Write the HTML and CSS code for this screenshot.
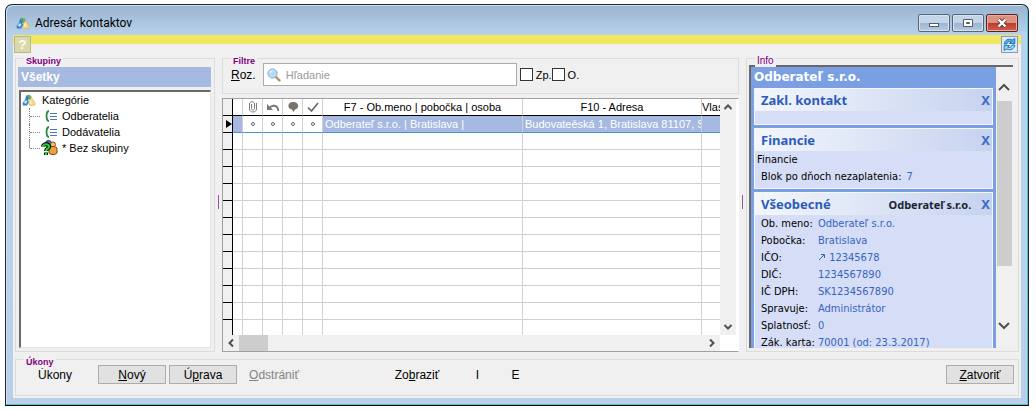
FILE: index.html
```html
<!DOCTYPE html>
<html lang="sk">
<head>
  <meta charset="UTF-8">
  <meta name="viewport" content="width=device-width, initial-scale=1.0">
  <title>Adresár kontaktov</title>
  <link rel="stylesheet" href="styles.css">
</head>
<body>
  <div class="window">
    <!-- Title bar -->
    <header class="titlebar">
      <svg class="icon" viewBox="0 0 14 12">
        <path d="M4 1.500c2-1.500 5-1 5.500 1.500L8 6 5 5z" fill="#6fae5a"/>
        <path d="M4 2l3 1-1 3 1 2-2 3.500H1L.5 9 3 6z" fill="#2f83c8"/>
        <path d="M1.500 8.500L4 6l1.500 1.500L4 10z" fill="#c4e4f8"/>
        <path d="M9.500 3.500l4 6.500c-1.500 2-5 2-7 0z" fill="#f3dc86" stroke="#dca548" stroke-width=".6"/>
        <path d="M9 5l-1.500 4.500h2z" fill="#fff6cf"/>
      </svg>
      <h1>Adresár kontaktov</h1>
      <div class="window-buttons">
        <button type="button" aria-label="Minimalizovať">
          <svg viewBox="0 0 12 10"><rect x="1.500" y="5.500" width="9" height="3" fill="#fff" stroke="#555c68"/></svg>
        </button>
        <button type="button" aria-label="Maximalizovať">
          <svg viewBox="0 0 12 10"><path d="M1.500 1.500h9v7h-9z" fill="#fff" stroke="#555c68"/><path d="M4.500 4.500h3v1h-3z" fill="#9db4cf" stroke="#555c68"/></svg>
        </button>
        <button type="button" class="close" aria-label="Zavrieť">
          <svg viewBox="0 0 12 10"><path d="M2.500 1.500l7 7M9.500 1.500l-7 7" stroke="#5b3434" stroke-width="4"/><path d="M2.500 1.500l7 7M9.500 1.500l-7 7" stroke="#fff" stroke-width="2.400"/></svg>
        </button>
      </div>
    </header>

    <div class="client">
      <div class="toolbar">
        <button type="button" class="help">?</button>
        <button type="button" class="refresh" aria-label="Obnoviť">
          <svg viewBox="0 0 14 14">
            <path d="M2 6.500C2.500 3 6 1 9.500 2.800L12 1.500V6H7l1.700-1.500C6.500 3.800 5 4.800 4.500 6.500z" fill="#4db4ea" stroke="#1565b5" stroke-width=".8"/>
            <path d="M12 7.500C11.500 11 8 13 4.500 11.200L2 12.500V8h5L5.300 9.500c2.200.7 3.700-.3 4.200-2z" fill="#8fdcf5" stroke="#1565b5" stroke-width=".8"/>
          </svg>
        </button>
      </div>

      <main class="columns">
        <!-- Groups tree -->
        <fieldset class="groups">
          <legend>Skupiny</legend>
          <h2>Všetky</h2>
          <div class="tree">
            <div class="tree-root">
              <svg class="icon" viewBox="0 0 14 12">
                <path d="M4 1.500c2-1.500 5-1 5.500 1.500L8 6 5 5z" fill="#6fae5a"/>
                <path d="M4 2l3 1-1 3 1 2-2 3.500H1L.5 9 3 6z" fill="#2f83c8"/>
                <path d="M1.500 8.500L4 6l1.500 1.500L4 10z" fill="#c4e4f8"/>
                <path d="M9.500 3.500l4 6.500c-1.500 2-5 2-7 0z" fill="#f3dc86" stroke="#dca548" stroke-width=".6"/>
                <path d="M9 5l-1.500 4.500h2z" fill="#fff6cf"/>
              </svg>
              Kategórie
            </div>
            <ul>
              <li>
                <svg class="icon" viewBox="0 0 14 12"><path d="M5 1C2 1.500 3 4 2.500 6 3 8 2 10.500 5 11" fill="none" stroke="#2c8a45" stroke-width="1.800"/><path d="M6 3.500h7M6 6.500h7M6 9.500h7" stroke="#4d78bd"/></svg>
                Odberatelia
              </li>
              <li>
                <svg class="icon" viewBox="0 0 14 12"><path d="M5 1C2 1.500 3 4 2.500 6 3 8 2 10.500 5 11" fill="none" stroke="#2c8a45" stroke-width="1.800"/><path d="M6 3.500h7M6 6.500h7M6 9.500h7" stroke="#4d78bd"/></svg>
                Dodávatelia
              </li>
              <li>
                <svg class="icon-group" viewBox="0 0 17 16">
                  <circle cx="7.500" cy="3.500" r="3" fill="#5b6fae" stroke="#27325e"/>
                  <circle cx="12" cy="4.500" r="2.500" fill="#f3c171" stroke="#8a4e12"/>
                  <path d="M8 8c2-2 6-2 8 0v5c-2 2-6 2-8 0z" fill="#eda341" stroke="#7c420d"/>
                  <path d="M2 6.500c0-3 6-3 6 .2C8 9 5 8.500 5 11M5 12.500v2.500" fill="none" stroke="#000" stroke-width="4"/>
                  <path d="M2 6.500c0-3 6-3 6 .2C8 9 5 8.500 5 11M5 12.500v2.500" fill="none" stroke="#17d82b" stroke-width="2.200"/>
                </svg>
                * Bez skupiny
              </li>
            </ul>
          </div>
        </fieldset>

        <div class="splitter"></div>

        <!-- Filter and contact list -->
        <section class="contacts">
          <fieldset class="filters">
            <legend>Filtre</legend>
            <label for="search"><u>R</u>oz.</label>
            <div class="search">
              <svg viewBox="0 0 14 14"><path d="M8.500 8.500l4 4" stroke="#c08a55" stroke-width="2.400" stroke-linecap="round"/><circle cx="5.500" cy="5.500" r="4.600" fill="#b5dcf6" stroke="#83b1d8"/><path d="M3 5c0-1.500 1-2.300 2.500-2.300" fill="none" stroke="#fff"/></svg>
              <input type="text" id="search" placeholder="Hľadanie">
            </div>
            <label class="check"><input type="checkbox">Zp.</label>
            <label class="check"><input type="checkbox">O.</label>
          </fieldset>

          <div class="grid">
            <div class="grid-view">
              <table>
                <colgroup>
                  <col class="col-mark"><col class="col-mark">
                  <col class="col-flag"><col class="col-flag"><col class="col-flag"><col class="col-flag">
                  <col class="col-name"><col class="col-address"><col>
                </colgroup>
                <thead>
                  <tr>
                    <th></th>
                    <th></th>
                    <th><svg viewBox="0 0 12 12"><path d="M4.500 3v4.500c0 2 3 2 3 0V3c0-3-5-3-5 0v5c0 4 7 4 7 0V2" fill="none" stroke="#808080"/></svg></th>
                    <th><svg viewBox="0 0 12 12"><path d="M0 3v6h6L3.800 6.800C7 4.500 10 6 10.500 10h1.500C12.500 4 7 2 2.500 5.500z" fill="#777"/></svg></th>
                    <th><svg viewBox="0 0 12 12"><path d="M6 1c7 0 6 7 2 7.500L6.500 11 5 8.500C0 8 0 1 6 1z" fill="#7a716b"/></svg></th>
                    <th><svg viewBox="0 0 12 12"><path d="M1 6.500L4.500 10 11 2" fill="none" stroke="#666" stroke-width="1.600"/></svg></th>
                    <th>F7 - Ob.meno | pobočka | osoba</th>
                    <th>F10 - Adresa</th>
                    <th class="clipped">Vlas</th>
                  </tr>
                </thead>
                <tbody>
                  <tr class="selected">
                    <td><svg viewBox="0 0 6 8"><path d="M0 0l6 4-6 4z"/></svg></td>
                    <td></td>
                    <td><i class="dot"></i></td><td><i class="dot"></i></td><td><i class="dot"></i></td><td><i class="dot"></i></td>
                    <td>Odberateľ s.r.o. | Bratislava |</td>
                    <td>Budovateěská 1, Bratislava 81107, S</td>
                    <td></td>
                  </tr>
                  <tr><td></td><td></td><td></td><td></td><td></td><td></td><td></td><td></td><td></td></tr>
                  <tr><td></td><td></td><td></td><td></td><td></td><td></td><td></td><td></td><td></td></tr>
                  <tr><td></td><td></td><td></td><td></td><td></td><td></td><td></td><td></td><td></td></tr>
                  <tr><td></td><td></td><td></td><td></td><td></td><td></td><td></td><td></td><td></td></tr>
                  <tr><td></td><td></td><td></td><td></td><td></td><td></td><td></td><td></td><td></td></tr>
                  <tr><td></td><td></td><td></td><td></td><td></td><td></td><td></td><td></td><td></td></tr>
                  <tr><td></td><td></td><td></td><td></td><td></td><td></td><td></td><td></td><td></td></tr>
                  <tr><td></td><td></td><td></td><td></td><td></td><td></td><td></td><td></td><td></td></tr>
                  <tr><td></td><td></td><td></td><td></td><td></td><td></td><td></td><td></td><td></td></tr>
                  <tr><td></td><td></td><td></td><td></td><td></td><td></td><td></td><td></td><td></td></tr>
                  <tr><td></td><td></td><td></td><td></td><td></td><td></td><td></td><td></td><td></td></tr>
                  <tr><td></td><td></td><td></td><td></td><td></td><td></td><td></td><td></td><td></td></tr>
                </tbody>
              </table>
            </div>
            <div class="scroll-y">
              <button type="button" aria-label="Hore"><svg viewBox="0 0 10 10"><path d="M1.500 7L5 3.500 8.500 7"/></svg></button>
              <button type="button" aria-label="Dole"><svg viewBox="0 0 10 10"><path d="M1.500 3L5 6.500 8.500 3"/></svg></button>
            </div>
            <div class="scroll-x">
              <button type="button" aria-label="Vľavo"><svg viewBox="0 0 10 10"><path d="M7 1.500L3.500 5 7 8.500"/></svg></button>
              <div class="thumb"></div>
              <button type="button" aria-label="Vpravo"><svg viewBox="0 0 10 10"><path d="M3 1.500L6.500 5 3 8.500"/></svg></button>
            </div>
          </div>
        </section>

        <div class="splitter"></div>

        <!-- Contact detail -->
        <fieldset class="info">
          <legend>Info</legend>
          <div class="info-frame">
            <div class="info-view">
              <h2>Odberateľ s.r.o.</h2>
              <section class="card">
                <h3>Zakl. kontakt <button type="button">X</button></h3>
                <div class="card-body"></div>
              </section>
              <section class="card">
                <h3>Financie <button type="button">X</button></h3>
                <div class="card-body">
                  <p>Financie</p>
                  <dl class="inline"><dt>Blok po dňoch nezaplatenia:</dt><dd>7</dd></dl>
                </div>
              </section>
              <section class="card">
                <h3>Všeobecné <small>Odberateľ s.r.o.</small> <button type="button">X</button></h3>
                <div class="card-body">
                  <dl>
                    <dt>Ob. meno:</dt><dd>Odberateľ s.r.o.</dd>
                    <dt>Pobočka:</dt><dd>Bratislava</dd>
                    <dt>IČO:</dt><dd><svg viewBox="0 0 8 8"><path d="M1 7l5.500-5.500M3 1.500h3.500V5" fill="none" stroke="#3565bd"/></svg> 12345678</dd>
                    <dt>DIČ:</dt><dd>1234567890</dd>
                    <dt>IČ DPH:</dt><dd>SK1234567890</dd>
                    <dt>Spravuje:</dt><dd>Administrátor</dd>
                    <dt>Splatnosť:</dt><dd>0</dd>
                    <dt>Zák. karta:</dt><dd>70001 (od: 23.3.2017)</dd>
                  </dl>
                </div>
              </section>
            </div>
            <div class="info-scroll">
              <button type="button" aria-label="Hore"><svg viewBox="0 0 12 12"><path d="M1 9l5-5 5 5"/></svg></button>
              <div class="thumb"></div>
              <button type="button" aria-label="Dole"><svg viewBox="0 0 12 12"><path d="M1 3l5 5 5-5"/></svg></button>
            </div>
          </div>
        </fieldset>
      </main>

      <!-- Actions -->
      <fieldset class="actions">
        <legend>Úkony</legend>
        <button type="button" class="flat menu">Úkony</button>
        <button type="button"><u>N</u>ový</button>
        <button type="button">Ú<u>p</u>rava</button>
        <button type="button" class="flat remove" disabled><u>O</u>dstrániť</button>
        <button type="button" class="flat show">Zo<u>b</u>raziť</button>
        <button type="button" class="flat letter">I</button>
        <button type="button" class="flat letter">E</button>
        <button type="button" class="quit"><u>Z</u>atvoriť</button>
      </fieldset>
    </div>
  </div>
</body>
</html>
```

FILE: styles.css
```css
* {
  box-sizing: border-box;
}
body {
  display: flex;
  height: 100vh;
  margin: 0;
  padding: 4px 7px 5px 5px;
  background: #fff;
  font-family: "Liberation Sans", Arial, sans-serif;
  font-size: 11px;
  color: #000;
}
h1, h2, h3, p, ul, dl, dd {
  margin: 0;
  padding: 0;
}
button {
  padding: 0;
  font-family: inherit;
  font-size: 12px;
  color: #000;
}
svg {
  display: block;
}
.window {
  flex: 1;
  min-width: 0;
  display: flex;
  flex-direction: column;
  padding: 0 7px 7px;
  border: 1px solid #1c2733;
  border-bottom-color: #000;
  border-radius: 7px 7px 0 0;
  box-shadow: inset -1px -1px 0 #4fc4d8, inset 1px 1px 0 #d3e2f2;
  background: linear-gradient(#99b4d1, #b9d1ea 30px, #b9d1ea 120px, #bad0e8);
}

/* title bar */
.titlebar {
  display: flex;
  align-items: center;
  height: 30px;
  padding: 5px 3px 0 3px;
}
.icon {
  width: 14px;
  height: 12px;
}
.titlebar h1 {
  flex: 1;
  margin-left: 5px;
  font: 12px "Noto Sans", sans-serif;
  font-family: Roboto, "Segoe UI", sans-serif;
}
.window-buttons {
  display: flex;
  gap: 2px;
}
.window-buttons button {
  display: flex;
  align-items: center;
  justify-content: center;
  width: 32px;
  height: 18px;
  border: 1px solid #566579;
  border-radius: 2px;
  box-shadow: inset 0 0 0 1px #d5e2f0;
  background: linear-gradient(#c5d5e8 50%, #9db5d0 50%, #b5cbe3);
}
.window-buttons .close {
  border-color: #5a2323;
  box-shadow: inset 0 0 0 1px #e5aca1;
  background: linear-gradient(#dc9183 50%, #bb3b2a 50%, #d1604c);
}
.window-buttons svg {
  width: 12px;
  height: 10px;
}

.client {
  flex: 1;
  min-height: 0;
  display: flex;
  flex-direction: column;
  padding: 0 2px 2px;
  background: #f0f0f0;
}
.toolbar {
  display: flex;
  justify-content: space-between;
  height: 23px;
  margin: 0 -2px;
  padding: 1px 3px 0 1px;
  background: linear-gradient(#f0e861 9px, #f0f0f0 9px);
}
.toolbar button {
  width: 17px;
  height: 17px;
  border: 1px solid #b8b78f;
  background: #dcd9a9;
}
.toolbar .help {
  font-size: 13px;
  font-weight: bold;
  line-height: 15px;
  color: #fff;
}
.toolbar .refresh {
  border-color: #8c99a6;
  background: #dceaf5;
}
.refresh svg {
  width: 15px;
  height: 15px;
}

/* group boxes */
fieldset {
  position: relative;
  min-width: 0;
  margin: 0;
  padding: 0;
  border: 1px solid #dcdcdc;
}
legend {
  position: absolute;
  top: -4px;
  left: 8px;
  padding: 0 2px;
  font-size: 9px;
  font-weight: bold;
  line-height: 12px;
  color: #800080;
  background: #f0f0f0;
}
.columns {
  flex: 1;
  min-height: 0;
  display: flex;
}
.splitter {
  flex: none;
  width: 7px;
  background: linear-gradient(#a050a8, #a050a8) 3px 49% / 1px 14px no-repeat;
}

.groups {
  flex: none;
  width: 200px;
  display: flex;
  flex-direction: column;
  padding: 8px 3px 3px 2px;
}
.groups h2 {
  height: 20px;
  padding-left: 3px;
  font-size: 12px;
  line-height: 20px;
  color: #fff;
  background: #a5b9e1;
}
.tree {
  flex: 1;
  margin: 3px 0 0 1px;
  padding: 0 1px;
  border: 1px solid #e3e3e3;
  border-top: 2px solid #696969;
  border-left: 2px solid #696969;
  background: #fff;
}
.tree-root, .tree li {
  display: flex;
  align-items: center;
  gap: 4px;
  height: 16px;
}
.tree-root {
  gap: 6px;
}
.tree ul {
  margin-left: 7px;
  list-style: none;
}
.tree li {
  border-left: 1px dotted #808080;
}
.tree li::before {
  content: "";
  width: 10px;
  border-top: 1px dotted #808080;
}
.tree li:last-child {
  border-image: linear-gradient(#a0a0a0 50%, transparent 50%) 1;
}
.icon-group {
  flex: none;
  width: 17px;
  height: 16px;
  margin-left: -3px;
}

/* contact list */
.contacts {
  flex: 1;
  min-width: 0;
  display: flex;
  flex-direction: column;
  gap: 4px;
}
.filters {
  display: flex;
  align-items: center;
  height: 36px;
  padding: 4px 8px 0;
}
.filters label {
  font-size: 12px;
}
.search {
  display: flex;
  align-items: center;
  gap: 5px;
  width: 254px;
  height: 23px;
  margin: 0 3px 0 7px;
  padding: 0 3px;
  border: 1px solid #ababab;
  background: #fff;
}
.search svg {
  flex: none;
  width: 14px;
  height: 14px;
}
.search input {
  flex: 1;
  min-width: 0;
  padding: 0;
  border: 0;
  outline: 0;
  font: inherit;
}
.search input::placeholder {
  color: #999;
}
.filters .check {
  display: flex;
  align-items: center;
  gap: 3px;
  font-size: 11px;
}
.check input {
  appearance: none;
  width: 13px;
  height: 13px;
  margin: 0;
  border: 1px solid #333;
  background: #fff;
}
.grid {
  flex: 1;
  min-height: 0;
  display: grid;
  grid-template-columns: 1fr 18px;
  grid-template-rows: 1fr 16px;
  border: 1px solid #a0a0a0;
  border-right-color: #fff;
  background: #fff;
}
.grid-view {
  min-width: 0;
  min-height: 0;
  overflow: hidden;
}
table {
  width: 100%;
  table-layout: fixed;
  border-collapse: separate;
  border-spacing: 0;
}
.col-mark {
  width: 10px;
}
.col-flag {
  width: 20px;
}
.col-name {
  width: 200px;
}
.col-address {
  width: 179px;
}
th, td {
  height: 17px;
  padding: 0;
  border-right: 1px solid #d0d0d0;
  border-bottom: 1px solid #d0d0d0;
  font-weight: normal;
  line-height: 16px;
  white-space: nowrap;
  overflow: hidden;
}
th {
  border-bottom-color: #000;
}
.clipped {
  text-align: left;
}
th:last-child, td:last-child {
  border-right: 0;
}
th:first-child, td:first-child {
  border-right-color: #000;
  border-bottom-color: #000;
  background: #f0f0f0;
}
tr:last-child td {
  border-bottom-color: transparent;
}
th svg {
  width: 12px;
  height: 12px;
  margin: 0 auto;
}
td svg {
  width: 6px;
  height: 8px;
  margin-left: 3px;
}
.selected td {
  padding-left: 2px;
  border-bottom-color: #4a90d9;
  color: #fff;
  background: #a5b9e1;
}
.selected td:first-child {
  padding: 0;
  border-bottom-color: #000;
  background: #f0f0f0;
}
.selected td:nth-child(n+3):nth-child(-n+6) {
  padding: 0;
  background: #fff;
}
.dot {
  display: block;
  width: 4px;
  height: 4px;
  margin: 0 auto;
  border: 1px solid #666;
  border-radius: 50%;
}

/* scroll bars */
.scroll-x, .scroll-y, .info-scroll {
  display: flex;
  background: #f0f0f0;
}
.scroll-y, .info-scroll {
  flex-direction: column;
  justify-content: space-between;
}
.scroll-y {
  width: 16px;
}
.scroll-x button, .scroll-y button, .info-scroll button {
  display: flex;
  align-items: center;
  justify-content: center;
  width: 16px;
  height: 16px;
  border: 0;
  background: none;
}
.scroll-x svg, .scroll-y svg {
  width: 10px;
  height: 10px;
}
.scroll-x path, .scroll-y path, .info-scroll path {
  fill: none;
  stroke: #505050;
  stroke-width: 2;
}
.thumb {
  background: #cdcdcd;
}
.scroll-x .thumb {
  width: 29px;
  margin-right: auto;
}

/* contact detail */
.info {
  flex: none;
  width: 273px;
  display: flex;
  padding: 6px 5px 3px 2px;
}
.info legend {
  font-size: 10px;
  font-weight: normal;
}
.info-frame {
  flex: 1;
  min-width: 0;
  display: flex;
  border-top: 2px solid #696969;
  border-left: 2px solid #696969;
}
.info-view {
  flex: 1;
  min-width: 0;
  padding: 0 3px;
  overflow: hidden;
  font-family: "DejaVu Sans Condensed", Tahoma, sans-serif;
  background: #7b9fe3;
}
.info-view h2 {
  height: 21px;
  font: bold 12px/20px "DejaVu Sans", Verdana, sans-serif;
  color: #fff;
}
.card {
  margin-bottom: 3px;
  border: 1px solid #f4f7fd;
  background: #d6ddf7;
}
.card h3 {
  display: flex;
  align-items: center;
  height: 22px;
  padding: 0 2px 0 6px;
  font-family: "Noto Sans", Tahoma, sans-serif;
  font-size: 13px;
  color: #2b5bbd;
  background: linear-gradient(90deg, #f3f6fc, #c6d3ef);
}
.card small {
  flex: 1;
  padding-right: 10px;
  font-size: 11px;
  text-align: right;
  color: #1c2433;
}
.card h3 button {
  margin-left: auto;
  border: 0;
  font-size: 13px;
  font-weight: bold;
  color: #3d6cc6;
  background: none;
}
.card-body {
  min-height: 13px;
  padding-bottom: 3px;
  line-height: 17px;
}
.card-body p {
  padding-left: 2px;
}
dl {
  display: grid;
  grid-template-columns: 57px 1fr;
  padding-left: 6px;
  white-space: nowrap;
}
.inline {
  grid-template-columns: auto 1fr;
  column-gap: 5px;
}
dd {
  color: #3565bd;
}
dd svg {
  display: inline-block;
  width: 8px;
  height: 8px;
}
.info-scroll {
  width: 17px;
  padding: 12px 0 14px;
}
.info-scroll .thumb {
  flex: 1;
  margin: 6px 1px 52px;
}
.info-scroll svg {
  width: 12px;
  height: 12px;
}

/* actions */
.actions {
  flex: none;
  display: flex;
  align-items: center;
  height: 37px;
  margin-top: 7px;
  padding: 5px 4px 0 5px;
}
.actions button {
  width: 68px;
  height: 19px;
  margin-right: 3px;
  border: 1px solid #adadad;
  background: #e1e1e1;
}
.actions .flat {
  border-color: transparent;
  background: none;
}
.actions .menu {
  margin-right: 9px;
}
.actions .remove {
  color: #838383;
}
.actions .show {
  margin-left: 72px;
}
.actions .letter {
  width: 35px;
}
.actions .show + .letter {
  margin-left: 6px;
}
.actions .quit {
  margin: 0 0 0 auto;
}
```
